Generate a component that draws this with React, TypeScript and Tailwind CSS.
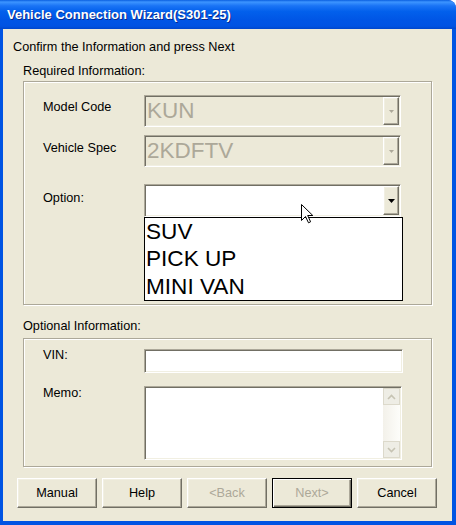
import React from "react";

const sunken =
  "border border-t-[#aca899] border-l-[#aca899] border-r-white border-b-white shadow-[inset_1px_1px_0_#716f64,inset_-1px_-1px_0_#f1efe2]";
const raised =
  "border border-t-white border-l-white border-r-[#716f64] border-b-[#716f64] shadow-[inset_-1px_-1px_0_#aca899,inset_1px_1px_0_#f1efe2]";

function Tri({ disabled }: { disabled?: boolean }) {
  return disabled ? (
    <svg width="5" height="3" viewBox="0 0 5 3">
      <path d="M0 0H5L2.5 3Z" fill="#aca899" />
    </svg>
  ) : (
    <svg width="7" height="4" viewBox="0 0 7 4">
      <path d="M0 0H7L3.5 4Z" fill="#000" />
    </svg>
  );
}

function Combo({ text, disabled, tall }: { text?: string; disabled?: boolean; tall?: boolean }) {
  return (
    <div
      className={`flex w-[257px] ${tall ? "h-[33px]" : "h-[32px]"} ${disabled ? "bg-[#ece9d8]" : "bg-white"} ${sunken} p-[1px]`}
    >
      <div className="flex-1 flex items-center pl-[1px] text-[22.5px] leading-none text-[#aca899]">{text}</div>
      <div className={`w-[16px] h-full flex items-center justify-center bg-[#ece9d8] ${raised}`}>
        <Tri disabled={disabled} />
      </div>
    </div>
  );
}

function Chevron({ up }: { up?: boolean }) {
  return (
    <svg width="9" height="6" viewBox="0 0 9 6">
      <path
        d={up ? "M1 5L4.5 1.5L8 5" : "M1 1L4.5 4.5L8 1"}
        fill="none"
        stroke="#c6c3b3"
        strokeWidth="1.6"
      />
    </svg>
  );
}

function Btn({ label, disabled, def }: { label: string; disabled?: boolean; def?: boolean }) {
  return (
    <div
      className={`w-[80px] h-[30px] flex items-center justify-center bg-[#ece9d8] ${
        def
          ? "border border-black shadow-[inset_1px_1px_0_#fff,inset_-1px_-1px_0_#716f64,inset_-2px_-2px_0_#aca899]"
          : raised
      } ${disabled ? "text-[#aca899]" : "text-black"}`}
    >
      {label}
    </div>
  );
}

export default function App() {
  return (
    <div className="relative w-[456px] h-[525px] flex flex-col bg-[#0054e3] rounded-tr-[8px] font-['Liberation_Sans',Arial,sans-serif] text-[12.7px] leading-[14px] text-black overflow-hidden">
      <div className="h-[29px] shrink-0 flex items-center pl-[7px] rounded-tr-[8px] bg-[linear-gradient(to_bottom,#0a5fe0_0%,#3d95ff_7%,#1a74f5_20%,#0260ec_40%,#0055e5_70%,#0053e3_90%,#0046cc_100%)]">
        <span className="text-white font-bold text-[13px] leading-none [text-shadow:1px_1px_0_#0a2a8c]">
          Vehicle Connection Wizard(S301-25)
        </span>
      </div>
      <div className="flex-1 ml-[3px] mr-[4px] mb-[4px] bg-[#ece9d8] flex flex-col pt-[11px] pl-[10px]">
        <div>Confirm the Information and press Next</div>

        <div className="ml-[10px] flex flex-col">
          <div className="mt-[10px]">Required Information:</div>
          <div className="relative mt-[3px] w-[409px] h-[224px] border border-[#aca899] shadow-[inset_1px_1px_0_#fff,1px_1px_0_#fff] pt-[13px] pl-[19px] flex flex-col">
            <div className="flex">
              <div className="w-[101px] pt-[5px]">Model Code</div>
              <Combo text="KUN" disabled />
            </div>
            <div className="flex mt-[8px]">
              <div className="w-[101px] pt-[6px]">Vehicle Spec</div>
              <Combo text="2KDFTV" disabled />
            </div>
            <div className="flex mt-[17px]">
              <div className="w-[101px] pt-[7px]">Option:</div>
              <div className="relative">
                <Combo tall />
                <div className="absolute left-0 top-full w-[259px] h-[84px] bg-white border border-black flex flex-col pl-[1px] text-[22.6px] leading-[27.3px]">
                  <div>SUV</div>
                  <div>PICK UP</div>
                  <div>MINI VAN</div>
                </div>
              </div>
            </div>
          </div>

          <div className="mt-[14px]">Optional Information:</div>
          <div className="mt-[5px] w-[409px] h-[129px] border border-[#aca899] shadow-[inset_1px_1px_0_#fff,1px_1px_0_#fff] pt-[10px] pl-[19px] flex flex-col">
            <div className="flex">
              <div className="w-[101px] mt-[-1px]">VIN:</div>
              <div className={`w-[259px] h-[24px] bg-white ${sunken}`} />
            </div>
            <div className="flex mt-[13px]">
              <div className="w-[101px] pt-[0px]">Memo:</div>
              <div className={`w-[258px] h-[74px] bg-white ${sunken} p-[1px] flex justify-end`}>
                <div className="w-[17px] h-full flex flex-col bg-[#f4f3ee]">
                  <div className="h-[17px] flex items-center justify-center bg-[#eeede5] border border-[#dcd9cb]">
                    <Chevron up />
                  </div>
                  <div className="flex-1 bg-[linear-gradient(to_right,#f3f1ea,#fdfdfa)]" />
                  <div className="h-[17px] flex items-center justify-center bg-[#eeede5] border border-[#dcd9cb]">
                    <Chevron />
                  </div>
                </div>
              </div>
            </div>
          </div>
        </div>

        <div className="mt-[11px] ml-[4px] flex gap-[5px]">
          <Btn label="Manual" />
          <Btn label="Help" />
          <Btn label="<Back" disabled />
          <Btn label="Next>" disabled def />
          <Btn label="Cancel" />
        </div>
      </div>

      <svg
        className="absolute left-[301px] top-[204px]"
        width="13"
        height="20"
        viewBox="0 0 13 20"
      >
        <path
          d="M0.5 0.5L0.5 16.5L4.5 12.5L7.5 18.8L9.6 17.8L6.7 11.5L11.8 11.5Z"
          fill="#fff"
          stroke="#000"
          strokeWidth="1"
          strokeLinejoin="miter"
        />
      </svg>
    </div>
  );
}
